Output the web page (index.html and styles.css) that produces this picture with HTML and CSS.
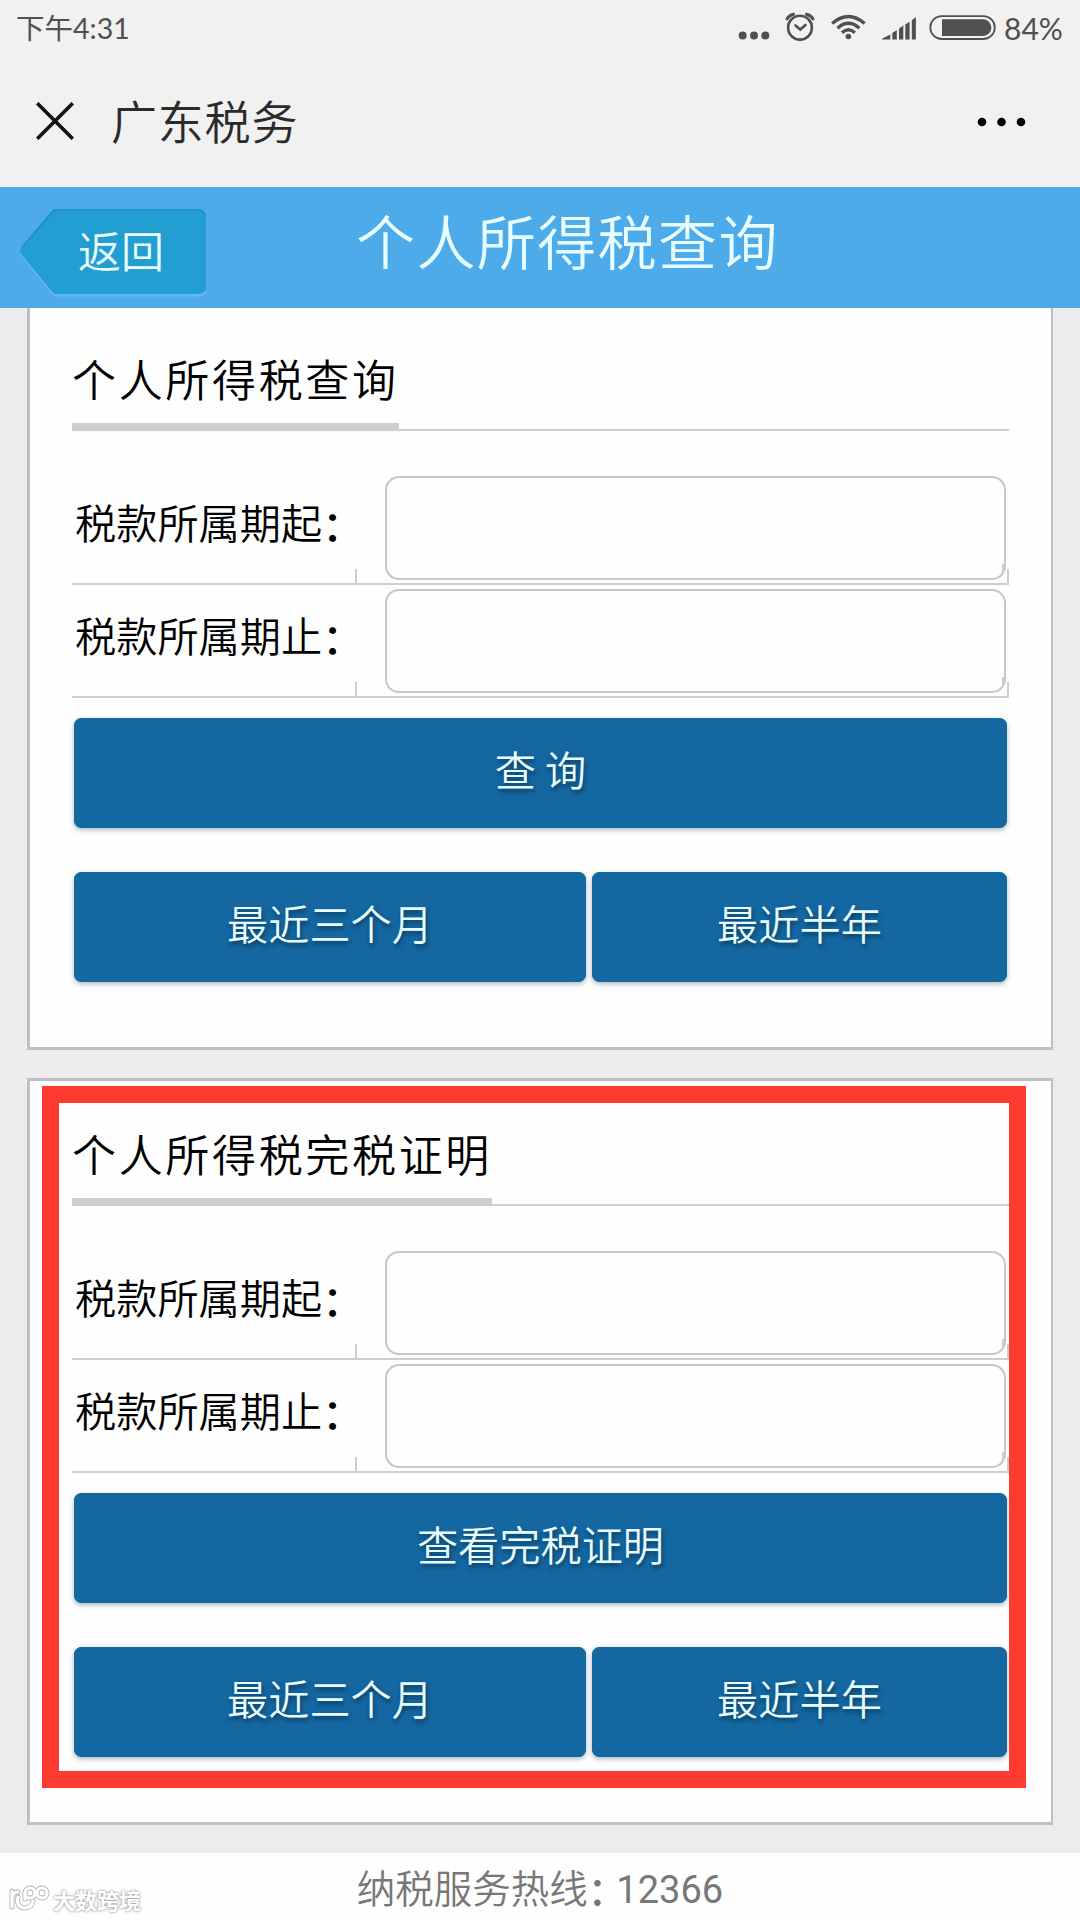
FILE: index.html
```html
<!DOCTYPE html>
<html lang="zh-CN">
<head>
  <meta charset="UTF-8" />
  <title>广东税务</title>
  <meta name="viewport" content="width=device-width, initial-scale=1" />
  <link rel="stylesheet" href="styles.css">
</head>
<body>
  <div class="statusbar">
    <span class="time">下午4:31</span>
    <div class="icons">
      <svg width="256" height="44" viewBox="0 0 256 44">
        <g fill="#505050">
          <circle cx="6.700" cy="35.600" r="4" />
          <circle cx="18" cy="35.600" r="4" />
          <circle cx="29.300" cy="35.600" r="4" />
        </g>
        <!-- alarm -->
        <g fill="none" stroke="#505050" stroke-width="2.600" stroke-linecap="round">
          <circle cx="64" cy="27.700" r="11.900" />
          <path d="M59.500 25.500L64.300 29.500L69.500 25" />
          <path d="M51 19Q53 15.500 57.500 14.300M77 19Q75 15.500 70.500 14.300" stroke-width="3" />
        </g>
        <!-- wifi -->
        <g fill="none" stroke="#505050" stroke-width="3.400">
          <path d="M96.200 23.500Q112.400 9.500 128.600 23.500" />
          <path d="M101.500 28.200Q112.400 18.400 123.300 28.200" />
          <path d="M106 32.800Q112.400 26.800 118.800 32.800" />
        </g>
        <circle cx="112.400" cy="36.500" r="2.800" fill="#505050" />
        <!-- signal -->
        <path fill="#505050" d="M146.300 39.600V38.500L154.300 34.500V39.600ZM156.300 39.600V33L160.800 30V39.600ZM163 39.600V28.500L167.300 25.500V39.600ZM169.300 39.600V24.500L173.600 21.800V39.600ZM175.800 39.600V20.300L179.900 17V39.600Z" />
        <!-- battery -->
        <rect x="194.300" y="16.100" width="64.500" height="22.900" rx="11.400" fill="none" stroke="#505050" stroke-width="1.800" />
        <path fill="#505050" d="M206 19.200H247A8.400 8.400 0 0 1 247 36H206Z" />
      </svg>
      <span class="percent">84%</span>
    </div>
  </div>

  <div class="navbar">
    <svg class="close" width="38" height="38" viewBox="0 0 38 38">
      <path d="M1.200 1.200L36.800 36.800M36.800 1.200L1.200 36.800" stroke="#111" stroke-width="3.600" />
    </svg>
    <span class="nav-title">广东税务</span>
    <svg class="more" width="50" height="10" viewBox="0 0 50 10">
      <circle cx="5" cy="5" r="4.300" /><circle cx="24.500" cy="5" r="4.300" /><circle cx="44" cy="5" r="4.300" />
    </svg>
  </div>

  <div class="header">
    <a class="back">
      <svg class="back-shape" width="192" height="92" viewBox="0 0 192 92">
        <path d="M36 4H181Q188.500 4 188.500 11V81Q188.500 88.500 181 88.500H36L3 48Q1 45 3 42Z" fill="#62b8f0" />
        <path d="M36 1H180Q188 1 188 9V78Q188 86 180 86H36L3 46Q1 43 3 40Z" fill="#239ed0" />
        <path d="M4 39.500L36 2H180Q186 2.500 187 9" fill="none" stroke="#1f93c8" stroke-width="2" />
      </svg>
      <span>返回</span>
    </a>
    <span class="title">个人所得税查询</span>
  </div>

  <div class="card">
    <h2><span>个人所得税查询</span></h2>
    <div class="row">
      <label for="q-start">税款所属期起<b>：</b></label>
      <div class="field"><input id="q-start" /></div>
    </div>
    <div class="row">
      <label for="q-end">税款所属期止<b>：</b></label>
      <div class="field"><input id="q-end" /></div>
    </div>
    <button class="btn wide">查 询</button>
    <div class="btns">
      <button class="btn">最近三个月</button>
      <button class="btn">最近半年</button>
    </div>
  </div>

  <div class="card second">
    <h2><span>个人所得税完税证明</span></h2>
    <div class="row">
      <label for="p-start">税款所属期起<b>：</b></label>
      <div class="field"><input id="p-start" /></div>
    </div>
    <div class="row">
      <label for="p-end">税款所属期止<b>：</b></label>
      <div class="field"><input id="p-end" /></div>
    </div>
    <button class="btn wide">查看完税证明</button>
    <div class="btns">
      <button class="btn">最近三个月</button>
      <button class="btn">最近半年</button>
    </div>
    <div class="mark"></div>
  </div>

  <div class="footer">
    <span class="hotline">纳税服务热线<b>：</b><span class="tel">12366</span></span>
    <div class="watermark">
      <svg width="42" height="32" viewBox="0 0 42 32" fill="none" stroke-linecap="round">
        <g stroke="#b5b5b5" stroke-width="5">
          <path d="M4 8V24M4 14Q5 9 10 9M10 14Q8 24 16 25Q24 25 25 18" />
          <circle cx="22" cy="10" r="5" /><circle cx="34" cy="10" r="5" /><path d="M17 10V16" />
        </g>
        <g stroke="#fff" stroke-width="3.200">
          <path d="M4 8V24M4 14Q5 9 10 9M10 14Q8 24 16 25Q24 25 25 18" />
          <circle cx="22" cy="10" r="5" /><circle cx="34" cy="10" r="5" /><path d="M17 10V16" />
        </g>
      </svg>
      <span>大数跨境</span>
    </div>
  </div>
</body>
</html>
```
FILE: styles.css
```css
* {
  box-sizing: border-box;
}
body {
  margin: 0;
  width: 1080px;
  height: 1920px;
  overflow: hidden;
  background: #ecebee;
  font-family: "Noto Sans CJK SC", sans-serif;
  font-weight: 350;
  color: #000;
  display: flex;
  flex-direction: column;
}
.statusbar {
  height: 58px;
  background: #f1f1f1;
  display: flex;
  justify-content: space-between;
  padding: 0 16px;
  color: #505050;
  font-family: Lato, "Noto Sans CJK SC", sans-serif;
  font-size: 28.500px;
  font-weight: 400;
  line-height: 56px;
  white-space: nowrap;
}
.icons {
  display: flex;
}
.icons svg {
  overflow: visible;
}
.percent {
  width: 60px;
  margin-left: 12px;
  font-size: 30px;
}
.navbar {
  height: 129px;
  background: #f1f1f1;
  display: flex;
  align-items: center;
  padding: 0 53px 3px 36px;
}
.nav-title {
  margin: -4px 0 0 37px;
  font-size: 46px;
  letter-spacing: 0.8px;
  color: #2b2b2b;
}
.more {
  margin: 2px 0 0 auto;
}
.header {
  position: relative;
  z-index: 1;
  height: 121px;
  background: #4dabea;
  display: flex;
  align-items: flex-start;
  padding-left: 18px;
  color: #e8fdff;
}
.back {
  position: relative;
  width: 190px;
  height: 88px;
  margin-top: 21px;
  padding-left: 60px;
  font-size: 43px;
  line-height: 82px;
}
.back-shape {
  position: absolute;
  left: 0;
  top: 0;
}
.back span {
  position: relative;
}
.title {
  margin-left: 148px;
  font-size: 59px;
  letter-spacing: 1.4px;
  line-height: 105px;
}
.card {
  position: relative;
  height: 747px;
  margin: 0 27px;
  padding: 0 42px;
  background: #fefefe;
  border: 3px solid #bfbec1;
  border-right-width: 2px;
}
.header + .card {
  margin-top: -5px;
}
.second {
  margin-top: 28px;
}
h2 {
  margin: 0 0 41px;
  height: 125px;
  border-bottom: 2px solid #cfcdd0;
  display: flex;
  align-items: flex-end;
  font-size: 44px;
  font-weight: 350;
  letter-spacing: 2.67px;
}
h2 span {
  height: 80px;
  line-height: 54px;
  margin-bottom: -2px;
  border-bottom: 8px solid #cfcdd0;
}
.row {
  height: 113px;
  border-bottom: 2px solid #cfcdd0;
  display: flex;
}
.row label {
  position: relative;
  width: 285px;
  padding-left: 3px;
  font-size: 41.200px;
  line-height: 99px;
  white-space: nowrap;
}
.row b,
.hotline b {
  position: relative;
  top: 2px;
  font-weight: 500;
}
/* leftover cell borders at the bottom corners */
.row label::after,
.field::after,
.field::before {
  content: "";
  position: absolute;
  right: 0;
  bottom: 0;
  width: 2px;
  height: 14px;
  background: #cfcdd0;
}
.field::before {
  right: 5px;
  bottom: 10px;
  height: 9px;
}
.field {
  position: relative;
  flex: 1;
  padding: 4px 3px 0 28px;
}
input {
  display: block;
  width: 100%;
  height: 104px;
  border: 2px solid #c8c6ca;
  border-radius: 14px;
  background: #fefefe;
}
.btn {
  height: 110px;
  padding: 0 0 11px;
  border: 1px solid #106b9a;
  border-radius: 7px;
  background: #1467a1;
  box-shadow: 0 2px 5px rgba(0, 60, 90, 0.35);
  color: #e8fdff;
  font-family: inherit;
  font-size: 41.200px;
  font-weight: 350;
  text-shadow: 1px 3px 4px rgba(0, 30, 50, 0.6);
}
.wide {
  display: block;
  width: 933px;
  margin: 20px 2px 44px;
}
.btns {
  display: grid;
  grid-template-columns: 512px 415px;
  gap: 6px;
  margin: 0 2px;
}
/* red frame laid over the second card */
.mark {
  position: absolute;
  left: 12px;
  top: 5px;
  width: 984px;
  height: 702px;
  border: 17px solid #fd3b30;
}
.footer {
  position: relative;
  height: 67px;
  margin-top: 28px;
  background: #fefefe;
  text-align: center;
}
.hotline {
  font-size: 38.500px;
  line-height: 67px;
  color: #777;
}
.hotline b {
  letter-spacing: -10px;
}
.tel {
  font-family: Roboto, sans-serif;
  font-weight: 400;
  font-size: 38px;
}
.watermark {
  position: absolute;
  left: 8px;
  top: 30px;
  display: flex;
  align-items: center;
  gap: 3px;
  color: #fff;
  font-size: 22px;
  font-weight: 700;
  line-height: 32px;
  text-shadow: 0 0 2px #999, 0 0 3px #aaa;
}
```
